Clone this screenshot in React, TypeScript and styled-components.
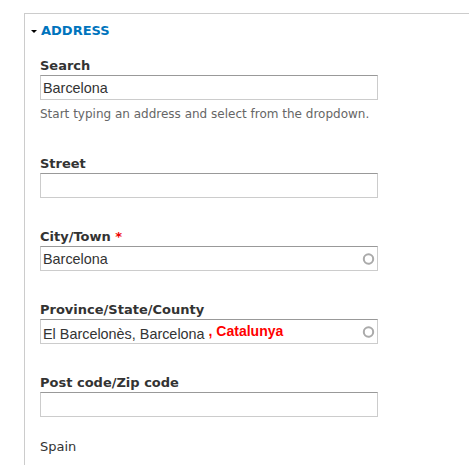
import styled, { createGlobalStyle, css } from "styled-components";

const GlobalStyle = createGlobalStyle`
    html, body {
        margin: 0;
        padding: 0;
        background: #fff;
        overflow: hidden;
    }
    body {
        font-family: "DejaVu Sans", Verdana, sans-serif;
        color: #333;
    }
`;

const Page = styled.div`
    padding: 13px 0 0 24px;
`;

const Fieldset = styled.fieldset`
    margin: 0;
    padding: 0;
    width: 480px;
    min-height: 480px;
    box-sizing: border-box;
    border: 1px solid #ccc;
`;

const Legend = styled.div`
    display: flex;
    align-items: center;
    gap: 4px;
    padding: 9px 0 0 6px;
    line-height: 16px;
    font-size: 13px;
    font-weight: 700;
    color: #0074bd;
`;

const Arrow = styled.span`
    display: inline-block;
    width: 0;
    height: 0;
    border-left: 3px solid transparent;
    border-right: 3px solid transparent;
    border-top: 3px solid #000;
`;

const Body = styled.div`
    padding: 18px 0 0 15px;
`;

const FormItem = styled.div<{ $spacing?: number }>`
    margin: 0 0 ${(p) => p.$spacing ?? 30}px;
`;

const Label = styled.label`
    display: block;
    padding-top: 1px;
    margin-bottom: 1px;
    font-size: 13px;
    line-height: 16px;
    font-weight: 700;
    color: #333;
`;

const Required = styled.span`
    color: #e00;
`;

const boxStyles = css`
    display: block;
    box-sizing: border-box;
    width: 338px;
    height: 25px;
    margin: 0;
    padding: 0 22px 0 2px;
    border: 1px solid #ccc;
    border-top-color: #999;
    background: #fff;
    font-family: "Liberation Sans", Arial, sans-serif;
    font-size: 14.4px;
    color: #333;
    outline: none;
`;

const TextInput = styled.input`
    ${boxStyles}
`;

const TextBox = styled.div`
    ${boxStyles}
    line-height: 23px;
    white-space: nowrap;
`;

const Suggestion = styled.span`
    margin-left: 4px;
    vertical-align: 3px;
    font-size: 14px;
    font-weight: 700;
    color: #f00;
`;

const InputWrap = styled.div`
    position: relative;
    width: 338px;
`;

const Throbber = styled.svg`
    position: absolute;
    right: 3px;
    top: 50%;
    transform: translateY(-50%);
`;

const Description = styled.div`
    padding: 5px 0 2px;
    font-size: 12px;
    line-height: 18px;
    color: #666;
`;

const Country = styled.div`
    font-size: 13px;
    line-height: 16px;
    color: #333;
`;

function Spinner() {
    return (
        <Throbber width="13" height="13" viewBox="0 0 13 13">
            <circle cx="6.5" cy="6.5" r="4.7" fill="none" stroke="#aaa" strokeWidth="2" />
        </Throbber>
    );
}

function App() {
    return (
        <>
            <GlobalStyle />
            <Page>
                <Fieldset>
                    <Legend>
                        <Arrow />
                        ADDRESS
                    </Legend>
                    <Body>
                        <FormItem>
                            <Label>Search</Label>
                            <TextInput readOnly defaultValue="Barcelona" />
                            <Description>Start typing an address and select from the dropdown.</Description>
                        </FormItem>
                        <FormItem>
                            <Label>Street</Label>
                            <TextInput readOnly defaultValue="" />
                        </FormItem>
                        <FormItem>
                            <Label>
                                City/Town <Required>*</Required>
                            </Label>
                            <InputWrap>
                                <TextInput readOnly defaultValue="Barcelona" />
                                <Spinner />
                            </InputWrap>
                        </FormItem>
                        <FormItem>
                            <Label>Province/State/County</Label>
                            <InputWrap>
                                <TextBox>
                                    El Barcelonès, Barcelona
                                    <Suggestion>, Catalunya</Suggestion>
                                </TextBox>
                                <Spinner />
                            </InputWrap>
                        </FormItem>
                        <FormItem $spacing={22}>
                            <Label>Post code/Zip code</Label>
                            <TextInput readOnly defaultValue="" />
                        </FormItem>
                        <Country>Spain</Country>
                    </Body>
                </Fieldset>
            </Page>
        </>
    );
}

export default App;
